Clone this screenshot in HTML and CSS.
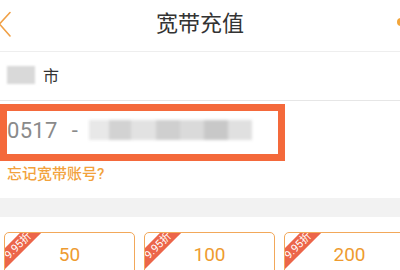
FILE: index.html
```html
<!DOCTYPE html>
<html lang="zh">
<head>
<meta charset="utf-8">
<title>宽带充值</title>
<link rel="stylesheet" href="styles.css">
</head>
<body>
<div class="page">
  <header class="nav">
    <svg class="back" width="14" height="27" viewBox="0 0 14 27"><polyline points="12,1.5 1.5,13 12,25" fill="none" stroke="#F0A046" stroke-width="1.6" stroke-linecap="round" stroke-linejoin="round"/></svg>
    <h1 class="title">宽带充值</h1>
    <span class="dot"></span>
  </header>
  <div class="city-row">
    <span class="city-blur"></span>
    <span class="city">市</span>
  </div>
  <div class="account">
    <div class="acct-line">
      <span class="prefix">0517</span>
      <span class="dash">-</span>
      <span class="blurbar">
        <span class="seg s1"></span><span class="seg s2"></span><span class="seg s3"></span><span class="seg s4"></span><span class="seg s5"></span><span class="seg s6"></span><span class="seg s7"></span>
      </span>
    </div>
    <div class="forgot">忘记宽带账号?</div>
  </div>
  <div class="band"></div>
  <div class="cards">
    <div class="card">
      <span class="ribbon">9.95折</span>
      <div class="amount">50</div>
      <div class="price">售价49.75元</div>
    </div>
    <div class="card">
      <span class="ribbon">9.95折</span>
      <div class="amount">100</div>
      <div class="price">售价99.50元</div>
    </div>
    <div class="card">
      <span class="ribbon">9.95折</span>
      <div class="amount">200</div>
      <div class="price">售价199.00元</div>
    </div>
  </div>
  <div class="highlight"></div>
</div>
</body>
</html>
```

FILE: styles.css
```css
html, body {
  margin: 0;
  padding: 0;
  background: #ffffff;
}
body {
  font-family: "Roboto", "Noto Sans CJK SC", sans-serif;
  color: #333333;
}
.page {
  position: relative;
  width: 400px;
  height: 270px;
  overflow: hidden;
}
.nav {
  height: 51px;
  border-bottom: 1px solid #eeeeee;
  display: grid;
  grid-template-columns: 1fr auto 1fr;
  align-items: center;
}
.back {
  margin-left: -2px;
  margin-top: -2px;
  display: block;
}
.title {
  margin: 0;
  font-size: 22px;
  font-weight: 400;
  color: #333333;
  line-height: 30px;
  margin-top: -4px;
}
.dot {
  justify-self: end;
  width: 8px;
  height: 8px;
  border-radius: 50%;
  background: #F2A53A;
  margin-right: -5px;
  margin-top: -7px;
  filter: blur(0.6px);
}
.city-row {
  height: 48px;
  border-bottom: 1px solid #e6e6e6;
  display: flex;
  align-items: center;
  padding-left: 7px;
}
.city-blur {
  width: 28px;
  height: 18px;
  background: #d9d9d9;
  filter: blur(1px);
  margin-top: -2px;
}
.city {
  font-size: 16px;
  margin-left: 8px;
  margin-top: -3px;
  color: #333333;
}
.account {
  padding: 9px 0 14px 7px;
}
.acct-line {
  height: 40px;
  display: flex;
  align-items: center;
}
.prefix {
  font-size: 22px;
  color: #8a8a8a;
  letter-spacing: 0.3px;
}
.dash {
  font-size: 22px;
  color: #8a8a8a;
  margin-left: 14px;
}
.blurbar {
  display: flex;
  margin-left: 11px;
  height: 20px;
  filter: blur(1.5px);
}
.seg { display: block; height: 20px; }
.s1 { width: 20px; background: #e8e8e8; }
.s2 { width: 22px; background: #d2d2d2; }
.s3 { width: 25px; background: #e2e2e2; }
.s4 { width: 24px; background: #cfcfcf; }
.s5 { width: 24px; background: #dadada; }
.s6 { width: 24px; background: #c8c8c8; }
.s7 { width: 24px; background: #e0e0e0; }
.forgot {
  margin-top: 14px;
  font-size: 15px;
  line-height: 20px;
  font-weight: 500;
  color: #F2A23C;
}
.band {
  height: 19px;
  background: #f2f2f2;
}
.cards {
  margin-top: 15px;
  padding-left: 4px;
  display: flex;
  gap: 9px;
}
.card {
  position: relative;
  flex: 0 0 131px;
  height: 70px;
  box-sizing: border-box;
  border: 1.5px solid #F2A85A;
  border-radius: 5px;
  overflow: hidden;
  text-align: center;
  padding-top: 10px;
}
.ribbon {
  position: absolute;
  left: -20px;
  top: 5px;
  width: 66px;
  height: 15px;
  line-height: 15px;
  background: #EC6549;
  color: #ffffff;
  font-size: 11px;
  transform: rotate(-45deg);
  text-align: center;
}
.amount {
  font-size: 19px;
  line-height: 24px;
  color: #EE9B30;
}
.price {
  font-size: 14px;
  line-height: 20px;
  color: #EE9B30;
  margin-top: 1px;
}
.highlight {
  position: absolute;
  left: 0;
  top: 104px;
  width: 285px;
  height: 57px;
  box-sizing: border-box;
  border: 7px solid #F4693B;
}
```
